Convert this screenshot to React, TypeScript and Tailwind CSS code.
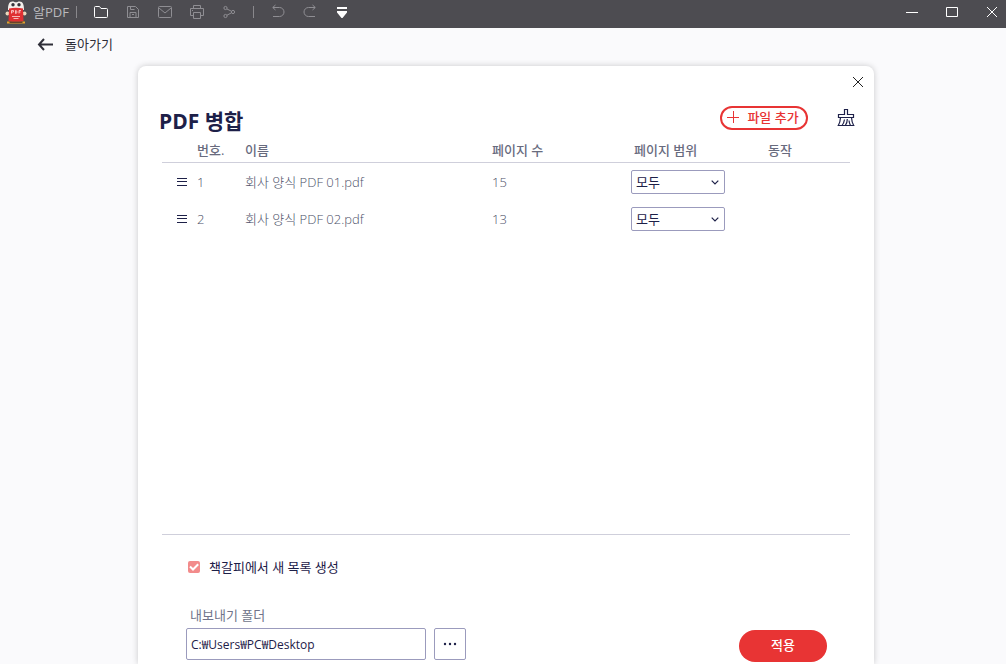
import React from "react";

type IconButtonProps = {
  label: string;
  className?: string;
  children: React.ReactNode;
};

function IconButton({ label, className = "h-6 w-8 text-[#8f8e93]", children }: IconButtonProps) {
  return (
    <button type="button" aria-label={label} className={`flex shrink-0 items-center justify-center ${className}`}>
      {children}
    </button>
  );
}

function Icon({ size = 16, stroke = 1, children }: { size?: number; stroke?: number; children: React.ReactNode }) {
  return (
    <svg
      width={size}
      height={size}
      viewBox={`0 0 ${size} ${size}`}
      fill="none"
      stroke="currentColor"
      strokeWidth={stroke}
      aria-hidden="true"
    >
      {children}
    </svg>
  );
}

function Mascot() {
  return (
    <svg width="22" height="24" viewBox="0 0 22 24" className="mt-0.5 shrink-0" aria-hidden="true">
      <path d="M2 20.500h18v2H2z" fill="#e0a02c" />
      <path d="M4.500 20.500h13v1.300h-13z" fill="#4a2a28" />
      <path d="M3 9c0-5.500 1-8.500 4.500-8.500 1.500 0 2.500.8 3.500.8S13 .5 14.500 .5C18 .5 19 3.500 19 9z" fill="#f4f0ec" />
      <circle cx="2.500" cy="12.500" r="2" fill="#ead9bd" />
      <circle cx="19.500" cy="12.500" r="2" fill="#ead9bd" />
      <path d="M4 7.500q7-1.500 14 0l.5 12.500q-7.500 1-15 0z" fill="#df2f32" />
      <circle cx="8" cy="3.700" r="1.700" fill="#35333a" />
      <circle cx="14" cy="3.700" r="1.700" fill="#35333a" />
      <path
        d="M6.500 12.500v-3h2V11h-2m4-1.500v3q1.500 0 1.500-1.500t-1.500-1.500zm3.500 3v-3h2m-2 1.500h1.500M7 15.500h8M8.500 17.500h5"
        stroke="#fbd9d9"
        strokeWidth=".8"
        fill="none"
      />
    </svg>
  );
}

function TitleBar() {
  return (
    <header className="flex h-7 items-start justify-between bg-[#4d4c51] pl-[5px]">
      <div className="flex h-6 items-center">
        <Mascot />
        <span className="ml-1.5 w-11 whitespace-nowrap text-[13px] leading-5 text-[#bab9bd]">알PDF</span>
        <span className="mr-2 -ml-px h-3 w-px bg-[#89888c]" />
        <IconButton label="열기" className="h-6 w-8 text-white">
          <Icon>
            <path d="M1.500 12.500v-9q0-1 1-1h4l1.500 2h5.500q1 0 1 1v7q0 1-1 1h-11q-1 0-1-1z" />
          </Icon>
        </IconButton>
        <IconButton label="저장">
          <Icon>
            <path d="M2.500 2.500h8l3 3v8h-11zM5.500 2.500v3h4M5 13.500v-5h6v5M7 10.500h2" />
          </Icon>
        </IconButton>
        <IconButton label="메일">
          <Icon>
            <rect x="1.500" y="2.500" width="13" height="11" rx="1" />
            <path d="m2 4 6 5 6-5" />
          </Icon>
        </IconButton>
        <IconButton label="인쇄">
          <Icon>
            <path d="M4.500 4.500v-3h7v3M4.500 11.500h-3v-7h13v7h-3M4.500 8.500h7v6h-7zM3 6.500h1" />
          </Icon>
        </IconButton>
        <IconButton label="공유">
          <Icon>
            <circle cx="4.500" cy="4" r="1.600" />
            <circle cx="4.500" cy="12" r="1.600" />
            <circle cx="12" cy="8" r="1.600" />
            <path d="m6 5 4.500 2.300M6 11.200l4.500-2.400" />
          </Icon>
        </IconButton>
        <span className="mx-2 h-3 w-px bg-[#89888c]" />
        <IconButton label="실행 취소">
          <Icon>
            <path d="M5.500 1 2.700 3.500 5.500 6M3 3.500h6.500a4.500 4.500 0 0 1 0 9H3" />
          </Icon>
        </IconButton>
        <IconButton label="다시 실행">
          <Icon>
            <path d="m10.500 1 2.800 2.500L10.500 6M13 3.500H6.500a4.500 4.500 0 0 0 0 9H13" />
          </Icon>
        </IconButton>
        <IconButton label="더 보기" className="h-6 w-8 text-white">
          <svg width="10" height="12" viewBox="0 0 10 12" fill="currentColor" aria-hidden="true">
            <path d="M0 1h10v2H0zM0 5h10v1.500L5.500 12h-1L0 6.500z" />
          </svg>
        </IconButton>
      </div>
      <div className="flex gap-3 text-white">
        <IconButton label="최소화" className="h-6 w-7">
          <Icon size={12}>
            <path d="M0 6.500h12" />
          </Icon>
        </IconButton>
        <IconButton label="최대화" className="h-6 w-7">
          <Icon size={12}>
            <path d="M.5 1.500h11v9H.5z" />
          </Icon>
        </IconButton>
        <IconButton label="창 닫기" className="h-6 w-7">
          <Icon size={12}>
            <path d="m1 1 10 10M11 1 1 11" />
          </Icon>
        </IconButton>
      </div>
    </header>
  );
}

const files = [
  { id: 1, name: "회사 양식 PDF 01.pdf", pages: 15 },
  { id: 2, name: "회사 양식 PDF 02.pdf", pages: 13 },
];

function FileTable() {
  return (
    <table className="w-full table-fixed text-left text-[13px] leading-5 text-[#4c5068]">
      <colgroup>
        <col className="w-[35px]" />
        <col className="w-12" />
        <col />
        <col className="w-[139px]" />
        <col className="w-[137px]" />
        <col className="w-[82px]" />
      </colgroup>
      <thead>
        <tr className="h-[22px] border-b border-[#cfcfdb] align-top text-[#686b7e]">
          <td />
          <th scope="col" className="font-medium">번호.</th>
          <th scope="col" className="font-medium">이름</th>
          <th scope="col" className="font-medium">페이지 수</th>
          <th scope="col" className="pl-[3px] font-medium">페이지 범위</th>
          <th scope="col" className="font-medium">동작</th>
        </tr>
      </thead>
      <tbody>
        {files.map((file) => (
          <tr key={file.id} className="h-[37px] *:pt-0.5">
            <td>
              <button type="button" aria-label={`${file.name} 순서 변경`} className="ml-[15px] block text-[#1d2048]">
                <svg width="10" height="8" viewBox="0 0 10 8" stroke="currentColor" aria-hidden="true">
                  <path d="M0 .5h10M0 3.500h10M0 7.500h10" />
                </svg>
              </button>
            </td>
            <td className="font-light">{file.id}</td>
            <td className="font-light">{file.name}</td>
            <td className="font-light">{file.pages}</td>
            <td>
              <div className="relative w-[94px]">
                <select
                  aria-label={`${file.name} 페이지 범위`}
                  className="block h-6 w-full appearance-none rounded-xs border border-[#9b9bbd] bg-white pl-1 text-[13px] leading-5 text-[#1d2048]"
                >
                  <option>모두</option>
                </select>
                <svg
                  width="8"
                  height="5"
                  viewBox="0 0 8 5"
                  fill="none"
                  stroke="#1d2048"
                  strokeWidth="1.200"
                  className="pointer-events-none absolute top-2.5 right-1.5"
                  aria-hidden="true"
                >
                  <path d="m.7.7 3.300 3.300L7.300.7" />
                </svg>
              </div>
            </td>
            <td />
          </tr>
        ))}
      </tbody>
    </table>
  );
}

export default function App() {
  return (
    <div className="flex min-h-screen flex-col bg-[#fafafc] font-['Open_Sans','Noto_Sans_CJK_KR',sans-serif] text-[#1d2048]">
      <TitleBar />
      <nav className="mb-1.5 flex h-8 items-center pl-[37px]">
        <a href="#back" className="flex items-center gap-3 text-[13px] leading-5 text-[#2e2e38]">
          <Icon stroke={2}>
            <path d="M7 3 2 8.500 7 14M2 8.500h14" />
          </Icon>
          돌아가기
        </a>
      </nav>
      <main className="flex grow flex-col pl-1.5">
        <section
          aria-labelledby="merge-title"
          className="mx-auto flex w-full max-w-[736px] grow flex-col rounded-t-lg bg-white px-6 shadow-[0_0_6px_rgba(0,0,0,0.2)]"
        >
          <div className="flex h-8 justify-end">
            <IconButton label="닫기" className="-mr-6 size-8 text-[#222]">
              <Icon size={12}>
                <path d="m1 1 10 10M11 1 1 11" />
              </Icon>
            </IconButton>
          </div>
          <div className="flex h-10 items-center justify-between">
            <h1 id="merge-title" className="-ml-[3px] pt-1.5 text-[21px] leading-7 font-bold">PDF 병합</h1>
            <div className="-mr-[5px] flex items-center gap-[29px]">
              <button
                type="button"
                className="flex h-6 w-[88px] items-center justify-center gap-2 rounded-full border-2 border-[#e83434] pr-0.5 pb-0.5 text-[13px] leading-5 font-medium whitespace-nowrap text-[#e83434]"
              >
                <Icon size={12}>
                  <path d="M6.500 0v12M0 6.500h12" />
                </Icon>
                파일 추가
              </button>
              <button type="button" aria-label="목록 지우기">
                <Icon size={18}>
                  <path
                    d="M7.500 5.500v-5h3v5h6v3h-15v-3zM3.500 8.500q-.3 5-2.200 8h15.400q-1.900-3-2.200-8M7.500 10.500q-.5 3.500-2.500 6M10.300 10q0 4-2 6.500M12 11.500q.3 3 1.500 5"
                    strokeWidth="1.200"
                  />
                </Icon>
              </button>
            </div>
          </div>
          <div className="min-h-[395px] grow border-b border-[#cfcfdb]">
            <div className="pt-0.5">
              <FileTable />
            </div>
          </div>
          <form className="pb-0.5 pl-6" onSubmit={(event) => event.preventDefault()}>
            <label className="mt-[22px] flex w-fit items-center gap-[9px] pl-0.5 text-[13px] leading-5">
              <span className="relative size-3">
                <input type="checkbox" defaultChecked className="peer block size-3 appearance-none rounded-xs bg-[#f28b8b]" />
                <svg
                  width="12"
                  height="12"
                  viewBox="0 0 12 12"
                  fill="none"
                  stroke="#fff"
                  strokeWidth="2"
                  className="pointer-events-none absolute inset-0 hidden peer-checked:block"
                  aria-hidden="true"
                >
                  <path d="m2 5.500 3 3L10.200 3.300" />
                </svg>
              </span>
              책갈피에서 새 목록 생성
            </label>
            <label htmlFor="export-folder" className="mt-7 block w-fit pl-1 text-[13px] leading-5 text-[#70748a]">
              내보내기 폴더
            </label>
            <div className="flex items-start gap-2 pt-[3px] pr-[23px]">
              <input
                id="export-folder"
                type="text"
                defaultValue="C:₩Users₩PC₩Desktop"
                className="h-8 w-60 rounded-xs border border-[#9b9bbd] bg-white px-1 text-[12px] leading-5"
              />
              <button
                type="button"
                aria-label="폴더 찾아보기"
                className="flex h-8 w-8 items-center justify-center rounded-xs border border-[#9b9bbd]"
              >
                <svg width="14" height="4" viewBox="0 0 14 4" fill="currentColor" aria-hidden="true">
                  <circle cx="2" cy="2" r="1.200" />
                  <circle cx="7" cy="2" r="1.200" />
                  <circle cx="12" cy="2" r="1.200" />
                </svg>
              </button>
              <button
                type="submit"
                className="mt-0.5 ml-auto h-8 w-[88px] rounded-full bg-[#e83434] pb-0.5 text-[13px] leading-5 font-medium text-white"
              >
                적용
              </button>
            </div>
          </form>
        </section>
      </main>
    </div>
  );
}
